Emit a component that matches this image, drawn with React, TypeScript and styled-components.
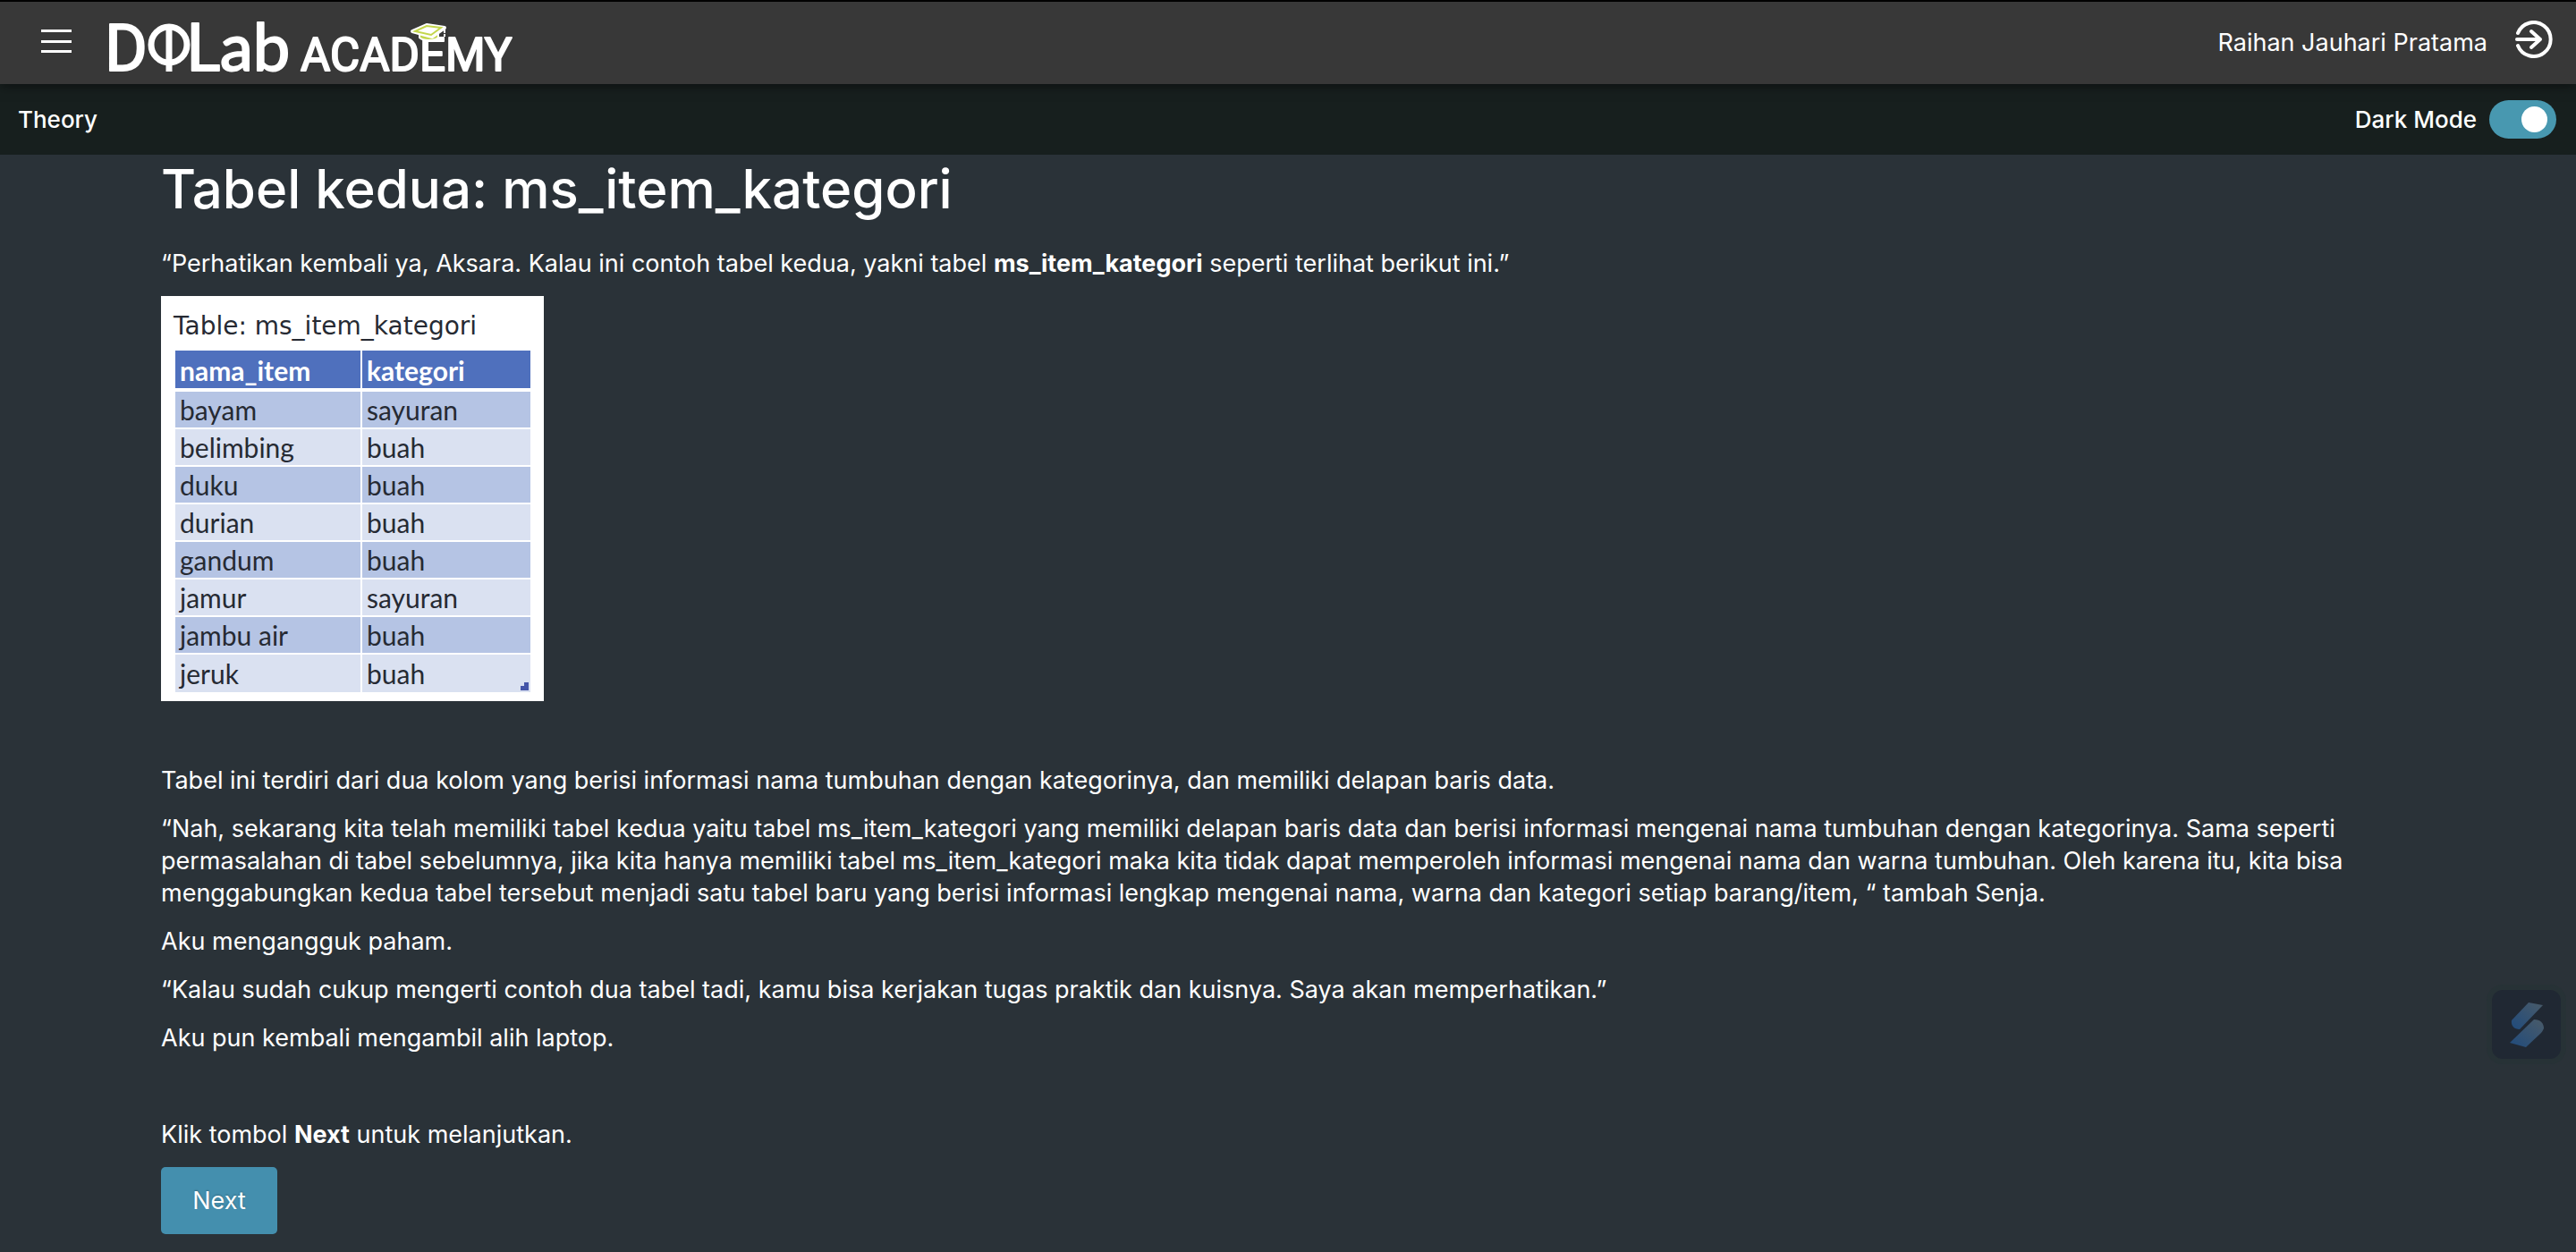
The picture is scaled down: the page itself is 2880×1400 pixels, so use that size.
import React, { useState } from "react";
import styled, { createGlobalStyle } from "styled-components";

const GlobalStyle = createGlobalStyle`
  *, *::before, *::after { box-sizing: border-box; }
  body {
    margin: 0;
    background: #2a3238;
    color: #ffffff;
    font-family: Inter, "Noto Sans", sans-serif;
    font-size: 27px;
    line-height: 36px;
  }
`;

const Page = styled.div`
  min-height: 100vh;
`;

const Header = styled.header`
  position: relative;
  z-index: 1;
  display: flex;
  align-items: center;
  justify-content: space-between;
  height: 94px;
  padding: 0 26px 0 46px;
  background: #383838;
  border-top: 2px solid #000000;
  box-shadow: 0 2px 12px rgba(0, 0, 0, 0.5);
`;

const HeaderGroup = styled.div<{ $gap: number }>`
  display: flex;
  align-items: center;
  gap: ${(p) => p.$gap}px;
`;

const IconButton = styled.button`
  display: flex;
  padding: 0;
  border: 0;
  background: none;
  color: inherit;
  cursor: pointer;
`;

const LogoLink = styled.a`
  display: flex;
  color: inherit;
`;

const SubBar = styled.div`
  display: flex;
  align-items: center;
  justify-content: space-between;
  height: 79px;
  padding: 0 22px 0 20px;
  background: #171f1e;
  font-size: 26px;
  font-weight: 500;
`;

const SwitchLabel = styled.label`
  display: flex;
  align-items: center;
  gap: 14px;
  cursor: pointer;
`;

const Switch = styled.input`
  appearance: none;
  display: flex;
  align-items: center;
  width: 75px;
  height: 43px;
  margin: 0;
  padding: 0 10px;
  border-radius: 22px;
  background: #777777;
  cursor: pointer;

  &::before {
    content: "";
    width: 29px;
    height: 29px;
    border-radius: 50%;
    background: #ffffff;
  }

  &:checked {
    justify-content: flex-end;
    background: #4898b0;
  }
`;

const Content = styled.main`
  padding: 8px 180px 18px;
`;

const Title = styled.h1`
  margin: 0 0 36px;
  font-size: 60px;
  line-height: 60px;
  font-weight: 500;
`;

const Paragraph = styled.p`
  margin: 0 0 18px;
`;

const Figure = styled.figure`
  width: 428px;
  margin: 0 0 71px;
  padding: 16px 13px 8px 14px;
  background: #ffffff;
  color: #262a33;
`;

const Caption = styled.figcaption`
  padding-bottom: 7px;
  font-family: "DejaVu Sans", sans-serif;
  font-size: 28px;
`;

const Table = styled.table`
  width: 100%;
  border-collapse: separate;
  border-spacing: 2px;
  table-layout: fixed;
  font-family: Lato, sans-serif;
  font-size: 30px;
  line-height: 36px;
`;

const HeadCell = styled.th<{ $width?: number }>`
  width: ${(p) => (p.$width ? `${p.$width}px` : "auto")};
  height: 44px;
  padding: 2px 6px 0 5px;
  border-bottom: 2px solid #ffffff;
  background: #4f70bd;
  color: #ffffff;
  text-align: left;
`;

const Row = styled.tr`
  background: #dae1f1;

  &:nth-child(odd) {
    background: #b5c4e4;
  }
`;

const Cell = styled.td`
  height: 40px;
  padding: 2px 6px 2px 5px;

  tr:last-child & {
    height: 42px;
  }

  tr:last-child &:last-child {
    background: linear-gradient(#4455a8, #4455a8) right 2px bottom 2px / 9px 5px no-repeat,
      linear-gradient(#4455a8, #4455a8) right 2px bottom 2px / 5px 9px no-repeat;
  }
`;

const NextButton = styled.button`
  display: block;
  width: 130px;
  height: 75px;
  border: 0;
  border-radius: 5px;
  background: #448fae;
  color: #ffffff;
  font: inherit;
  text-shadow: 0 -1px 2px rgba(0, 0, 0, 0.25);
  cursor: pointer;
`;

const FloatingButton = styled.button`
  position: fixed;
  right: 17px;
  bottom: 216px;
  display: flex;
  align-items: center;
  justify-content: center;
  width: 77px;
  height: 77px;
  padding: 0;
  border: 0;
  border-radius: 12px;
  background: #202833;
  box-shadow: 0 0 0 6px #273236;
  cursor: pointer;
`;

const rows: [string, string][] = [
  ["bayam", "sayuran"],
  ["belimbing", "buah"],
  ["duku", "buah"],
  ["durian", "buah"],
  ["gandum", "buah"],
  ["jamur", "sayuran"],
  ["jambu air", "buah"],
  ["jeruk", "buah"],
];

const LogoSvg = styled.svg`
  display: block;
  overflow: visible;
`;

const LogoText = styled.text<{ $family: string }>`
  font-family: ${(p) => p.$family}, sans-serif;
  fill: #ffffff;
  stroke: #ffffff;
  stroke-width: 2;
  stroke-linejoin: round;
`;

function Logo() {
  return (
    <LogoSvg width="470" height="92" viewBox="-5 -8 470 92" role="img" aria-label="DQLab Academy">
      <LogoText $family="Roboto" x="-4" y="69" fontSize="73">D</LogoText>
      <circle cx="68" cy="40" r="20" fill="none" stroke="#fff" strokeWidth="7" />
      <path d="M68 20v50" stroke="#fff" strokeWidth="7" />
      <LogoText $family="Lato" x="87" y="69" fontSize="74">Lab</LogoText>
      <LogoText $family="Roboto" x="215" y="69" fontSize="51">ACADEMY</LogoText>
      <path d="M348 26v6c4 4 17 4 21 0v-6z" fill="#c3d64b" stroke="#fff" strokeWidth="2" />
      <path d="M340 25l16-7 20 3-14 10z" fill="#fff" stroke="#fff" strokeWidth="4" strokeLinejoin="round" />
      <path d="M343 25l13-6 16 2-11 8z" fill="#fff" stroke="#c3d64b" strokeWidth="2" />
      <path d="M376 22v9" stroke="#fff" strokeWidth="2" strokeDasharray="5 1" />
    </LogoSvg>
  );
}

export default function App() {
  const [dark, setDark] = useState(true);

  return (
    <Page>
      <GlobalStyle />
      <Header>
        <HeaderGroup $gap={36}>
          <IconButton type="button" aria-label="Menu">
            <svg width="34" height="30" viewBox="0 0 34 30" fill="#fff">
              <path d="M0 0h34v3H0zM0 12h34v3H0zM0 23h34v3H0z" />
            </svg>
          </IconButton>
          <LogoLink href="#" aria-label="DQLab Academy">
            <Logo />
          </LogoLink>
        </HeaderGroup>
        <HeaderGroup $gap={31}>
          <span>Raihan Jauhari Pratama</span>
          <IconButton type="button" aria-label="Keluar">
            <svg width="42" height="50" viewBox="0 0 42 50" fill="none" stroke="#fff" strokeWidth="4" strokeLinecap="round" strokeLinejoin="round">
              <path d="M3 14A19 19 0 1 1 3 28" />
              <path d="M2 21h26M18 12l10 9-10 9" />
            </svg>
          </IconButton>
        </HeaderGroup>
      </Header>
      <SubBar>
        <span>Theory</span>
        <SwitchLabel>
          Dark Mode
          <Switch type="checkbox" role="switch" checked={dark} onChange={(e) => setDark(e.target.checked)} />
        </SwitchLabel>
      </SubBar>
      <Content>
        <Title>Tabel kedua: ms_item_kategori</Title>
        <Paragraph>
          “Perhatikan kembali ya, Aksara. Kalau ini contoh tabel kedua, yakni tabel <strong>ms_item_kategori</strong>{" "}
          seperti terlihat berikut ini.”
        </Paragraph>
        <Figure>
          <Caption>Table: ms_item_kategori</Caption>
          <Table>
            <thead>
              <tr>
                <HeadCell $width={207}>nama_item</HeadCell>
                <HeadCell>kategori</HeadCell>
              </tr>
            </thead>
            <tbody>
              {rows.map(([item, category]) => (
                <Row key={item}>
                  <Cell>{item}</Cell>
                  <Cell>{category}</Cell>
                </Row>
              ))}
            </tbody>
          </Table>
        </Figure>
        <Paragraph>
          Tabel ini terdiri dari dua kolom yang berisi informasi nama tumbuhan dengan kategorinya, dan memiliki delapan
          baris data.
        </Paragraph>
        <Paragraph>
          “Nah, sekarang kita telah memiliki tabel kedua yaitu tabel ms_item_kategori yang memiliki delapan baris data
          dan berisi informasi mengenai nama tumbuhan dengan kategorinya. Sama seperti permasalahan di tabel
          sebelumnya, jika kita hanya memiliki tabel ms_item_kategori maka kita tidak dapat memperoleh informasi
          mengenai nama dan warna tumbuhan. Oleh karena itu, kita bisa menggabungkan kedua tabel tersebut menjadi satu
          tabel baru yang berisi informasi lengkap mengenai nama, warna dan kategori setiap barang/item, “ tambah
          Senja.
        </Paragraph>
        <Paragraph>Aku mengangguk paham.</Paragraph>
        <Paragraph>
          “Kalau sudah cukup mengerti contoh dua tabel tadi, kamu bisa kerjakan tugas praktik dan kuisnya. Saya akan
          memperhatikan.”
        </Paragraph>
        <Paragraph>Aku pun kembali mengambil alih laptop.</Paragraph>
        <Paragraph>
          <br />
        </Paragraph>
        <Paragraph>
          Klik tombol <strong>Next</strong> untuk melanjutkan.
        </Paragraph>
        <NextButton type="button">Next</NextButton>
      </Content>
      <FloatingButton type="button" aria-label="Asisten">
        <svg width="38" height="50" viewBox="0 0 38 50">
          <defs>
            <linearGradient id="mark" x1="1" y1="0" x2="0" y2="1">
              <stop offset="0" stopColor="#4a5b69" />
              <stop offset="1" stopColor="#204b7c" />
            </linearGradient>
          </defs>
          <path d="M21 0l16 3-26 27C5 30 1 26 2 20z" fill="url(#mark)" />
          <path d="M27 19c7 0 11 4 11 10-1 2-2 4-3 5L18 50 0 45z" fill="url(#mark)" />
        </svg>
      </FloatingButton>
    </Page>
  );
}
